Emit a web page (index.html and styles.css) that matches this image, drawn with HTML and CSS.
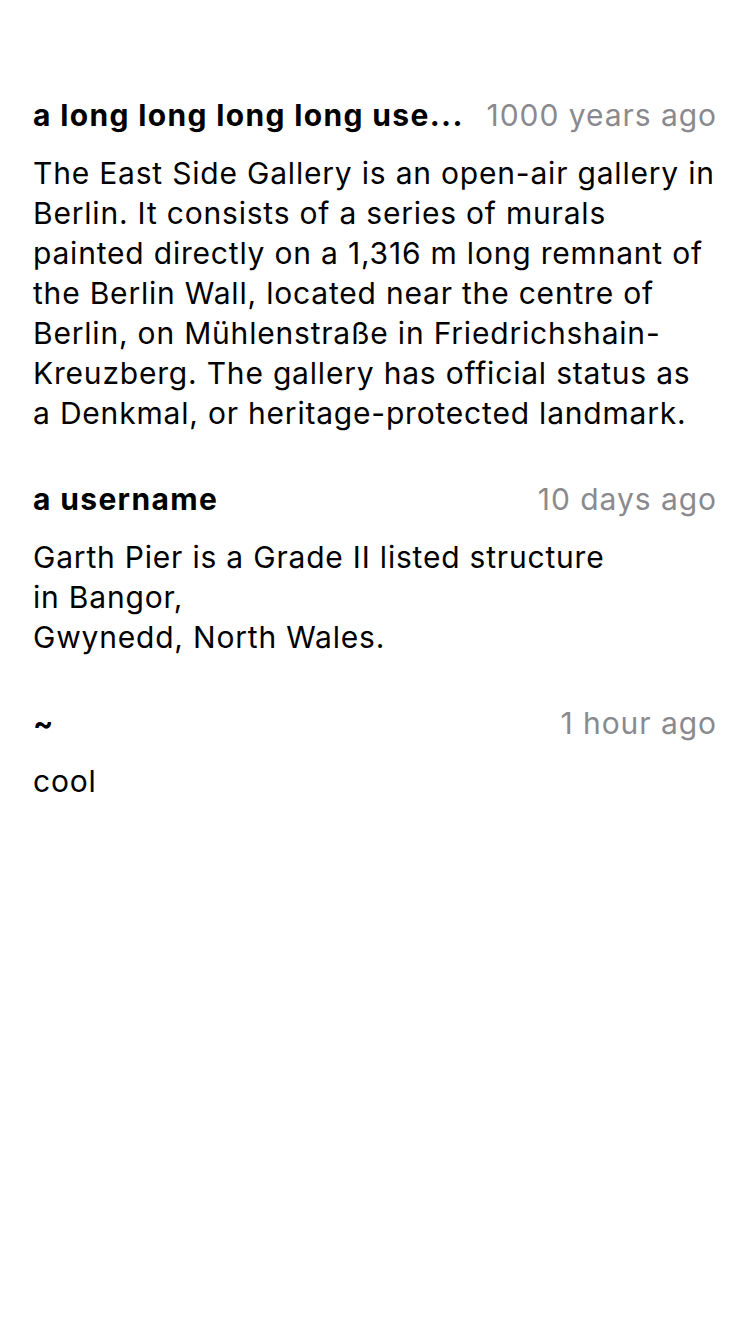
FILE: index.html
```html
<!DOCTYPE html>
<html lang="en">
<head>
<meta charset="utf-8">
<title>Comments</title>
<link rel="stylesheet" href="styles.css">
</head>
<body>
<main class="comments">
  <article class="comment">
    <header class="comment-head">
      <span class="author">a long long long long use...</span>
      <span class="time">1000 years ago</span>
    </header>
    <p class="body">The East Side Gallery is an open-air gallery in Berlin. It consists of a series of murals painted directly on a 1,316&nbsp;m long remnant of the Berlin Wall, located near the centre of Berlin, on Mühlenstraße in Friedrichshain-Kreuzberg. The gallery has official status as a&nbsp;Denkmal, or heritage-protected landmark.</p>
  </article>
  <article class="comment">
    <header class="comment-head">
      <span class="author">a username</span>
      <span class="time">10 days ago</span>
    </header>
    <p class="body">Garth Pier is a Grade II listed structure<br>in Bangor,<br>Gwynedd, North Wales.</p>
  </article>
  <article class="comment">
    <header class="comment-head">
      <span class="author">~</span>
      <span class="time">1 hour ago</span>
    </header>
    <p class="body">cool</p>
  </article>
</main>
</body>
</html>
```
FILE: styles.css
```css
html, body {
  margin: 0;
  padding: 0;
  background: #ffffff;
}
body {
  font-family: Inter, "Noto Sans", "Liberation Sans", sans-serif;
  color: #000000;
}
.comments {
  display: flex;
  flex-direction: column;
  gap: 46px;
  padding: 95px 33px 0 33px;
}
.comment {
  display: flex;
  flex-direction: column;
  gap: 18px;
}
.comment-head {
  display: flex;
  justify-content: space-between;
  align-items: center;
  gap: 16px;
  height: 40px;
  font-size: 30px;
  line-height: 40px;
}
.author {
  font-weight: 700;
  letter-spacing: 1.35px;
  white-space: nowrap;
  flex-shrink: 0;
}
.time {
  color: #8a8a8e;
  letter-spacing: 0.95px;
  white-space: nowrap;
  flex-shrink: 0;
}
.body {
  margin: 0;
  font-size: 30px;
  line-height: 40px;
  letter-spacing: 0.8px;
}
```
